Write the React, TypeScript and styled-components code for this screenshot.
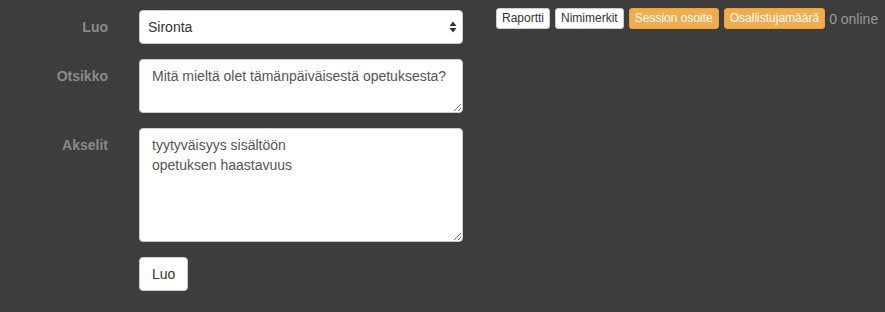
import React from "react";
import styled, { createGlobalStyle } from "styled-components";

const Global = createGlobalStyle`
  html, body { margin: 0; padding: 0; background: #3d3d3d; }
  body { font-family: "Liberation Sans", Arial, Helvetica, sans-serif; font-size: 14px; line-height: 20px; color: #333; }
  * { box-sizing: border-box; }
`;

const Page = styled.div`
  display: flex;
  align-items: flex-start;
  width: 885px;
  height: 312px;
  background: #3d3d3d;
`;

const Form = styled.form`
  display: grid;
  grid-template-columns: 108px 324px;
  column-gap: 31px;
  row-gap: 15px;
  padding-top: 10px;
`;

const Label = styled.label`
  text-align: right;
  font-weight: bold;
  color: #8a8a8a;
  padding-top: 7px;
  line-height: 20px;
`;

const SelectWrap = styled.div`
  position: relative;
  width: 324px;
  height: 34px;
`;

const Select = styled.select`
  appearance: none;
  -webkit-appearance: none;
  width: 100%;
  height: 34px;
  padding: 6px 24px 6px 8px;
  border: 1px solid #ccc;
  border-radius: 4px;
  background: #fff;
  color: #333;
  font-family: inherit;
  font-size: 14px;
  outline: none;
`;

const Arrow = styled.svg`
  position: absolute;
  right: 6px;
  top: 11px;
  pointer-events: none;
`;

const TextArea = styled.textarea<{ $h: number }>`
  display: block;
  width: 324px;
  height: ${(p) => p.$h}px;
  padding: 6px 12px;
  border: 1px solid #ccc;
  border-radius: 4px;
  background: #fff;
  color: #555;
  font-family: inherit;
  font-size: 14px;
  line-height: 20px;
  outline: none;
  resize: vertical;
`;

const Submit = styled.button`
  width: 49px;
  height: 34px;
  padding: 6px 12px;
  border: 1px solid #ccc;
  border-radius: 4px;
  background: #fff;
  color: #333;
  font-family: inherit;
  font-size: 14px;
  line-height: 20px;
`;

const Toolbar = styled.div`
  display: flex;
  align-items: center;
  gap: 5px;
  margin-left: 33px;
  padding-top: 8px;
`;

const SmallBtn = styled.button<{ $warn?: boolean }>`
  height: 21px;
  padding: 1px 5px;
  border: 1px solid ${(p) => (p.$warn ? "#eea236" : "#ccc")};
  border-radius: 3px;
  background: ${(p) => (p.$warn ? "#f0ad4e" : "#fff")};
  color: ${(p) => (p.$warn ? "#fff" : "#333")};
  font-family: inherit;
  font-size: 12px;
  line-height: 17px;
  white-space: nowrap;
`;

const Online = styled.span`
  color: #999;
  font-size: 14px;
  line-height: 20px;
  margin-left: -1px;
`;

const Empty = styled.div``;

export default function App() {
  return (
    <>
      <Global />
      <Page>
        <Form onSubmit={(e) => e.preventDefault()}>
          <Label>Luo</Label>
          <SelectWrap>
            <Select defaultValue="Sironta">
              <option>Sironta</option>
            </Select>
            <Arrow width="8" height="12" viewBox="0 0 8 12">
              <path d="M4 0.5 L7.5 5 L0.5 5 Z" fill="#333" />
              <path d="M4 11.5 L7.5 7 L0.5 7 Z" fill="#333" />
            </Arrow>
          </SelectWrap>
          <Label>Otsikko</Label>
          <TextArea $h={54} defaultValue="Mitä mieltä olet tämänpäiväisestä opetuksesta?" />
          <Label>Akselit</Label>
          <TextArea $h={114} defaultValue={"tyytyväisyys sisältöön\nopetuksen haastavuus"} />
          <Empty />
          <div>
            <Submit type="submit">Luo</Submit>
          </div>
        </Form>
        <Toolbar>
          <SmallBtn>Raportti</SmallBtn>
          <SmallBtn>Nimimerkit</SmallBtn>
          <SmallBtn $warn>Session osoite</SmallBtn>
          <SmallBtn $warn>Osallistujamäärä</SmallBtn>
          <Online>0 online</Online>
        </Toolbar>
      </Page>
    </>
  );
}
